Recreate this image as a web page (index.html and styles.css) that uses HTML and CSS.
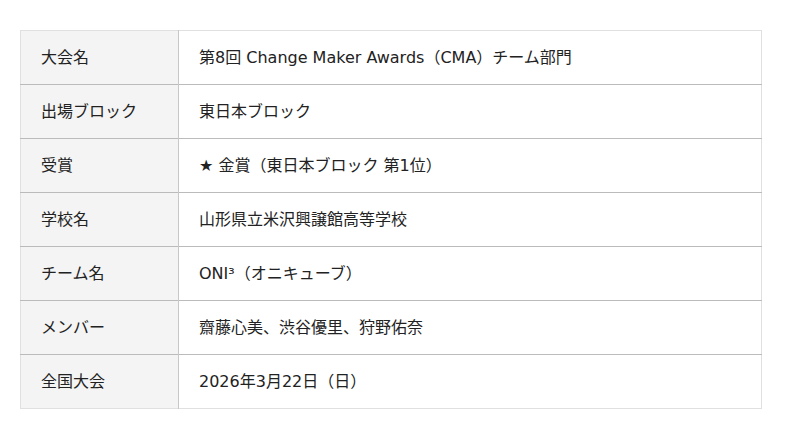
FILE: index.html
```html
<!DOCTYPE html>
<html lang="ja">
<head>
<meta charset="utf-8">
<link rel="stylesheet" href="styles.css">
</head>
<body>
<table class="info">
  <tr><th>大会名</th><td>第8回 Change Maker Awards（CMA）チーム部門</td></tr>
  <tr><th>出場ブロック</th><td>東日本ブロック</td></tr>
  <tr><th>受賞</th><td>★ 金賞（東日本ブロック 第1位）</td></tr>
  <tr><th>学校名</th><td>山形県立米沢興譲館高等学校</td></tr>
  <tr><th>チーム名</th><td>ONI³（オニキューブ）</td></tr>
  <tr><th>メンバー</th><td>齋藤心美、渋谷優里、狩野佑奈</td></tr>
  <tr><th>全国大会</th><td>2026年3月22日（日）</td></tr>
</table>
</body>
</html>
```
FILE: styles.css
```css
html, body {
  margin: 0;
  padding: 0;
  background: #fff;
}
body {
  padding: 30px 0 0 20px;
  font-family: "DejaVu Sans", "Noto Sans CJK JP", sans-serif;
  font-size: 16px;
  color: #222;
}
.info {
  width: 742px;
  border-collapse: collapse;
  border: 1px solid #e0e0e0;
}
.info tr {
  height: 54px;
}
.info tr + tr {
  border-top: 1px solid #bbb;
}
.info th,
.info td {
  padding: 0 20px 4px;
  text-align: left;
  font-weight: normal;
  vertical-align: middle;
}
.info th {
  width: 117px;
  background: #f4f4f4;
  border-right: 1px solid #c8c8c8;
}
```
